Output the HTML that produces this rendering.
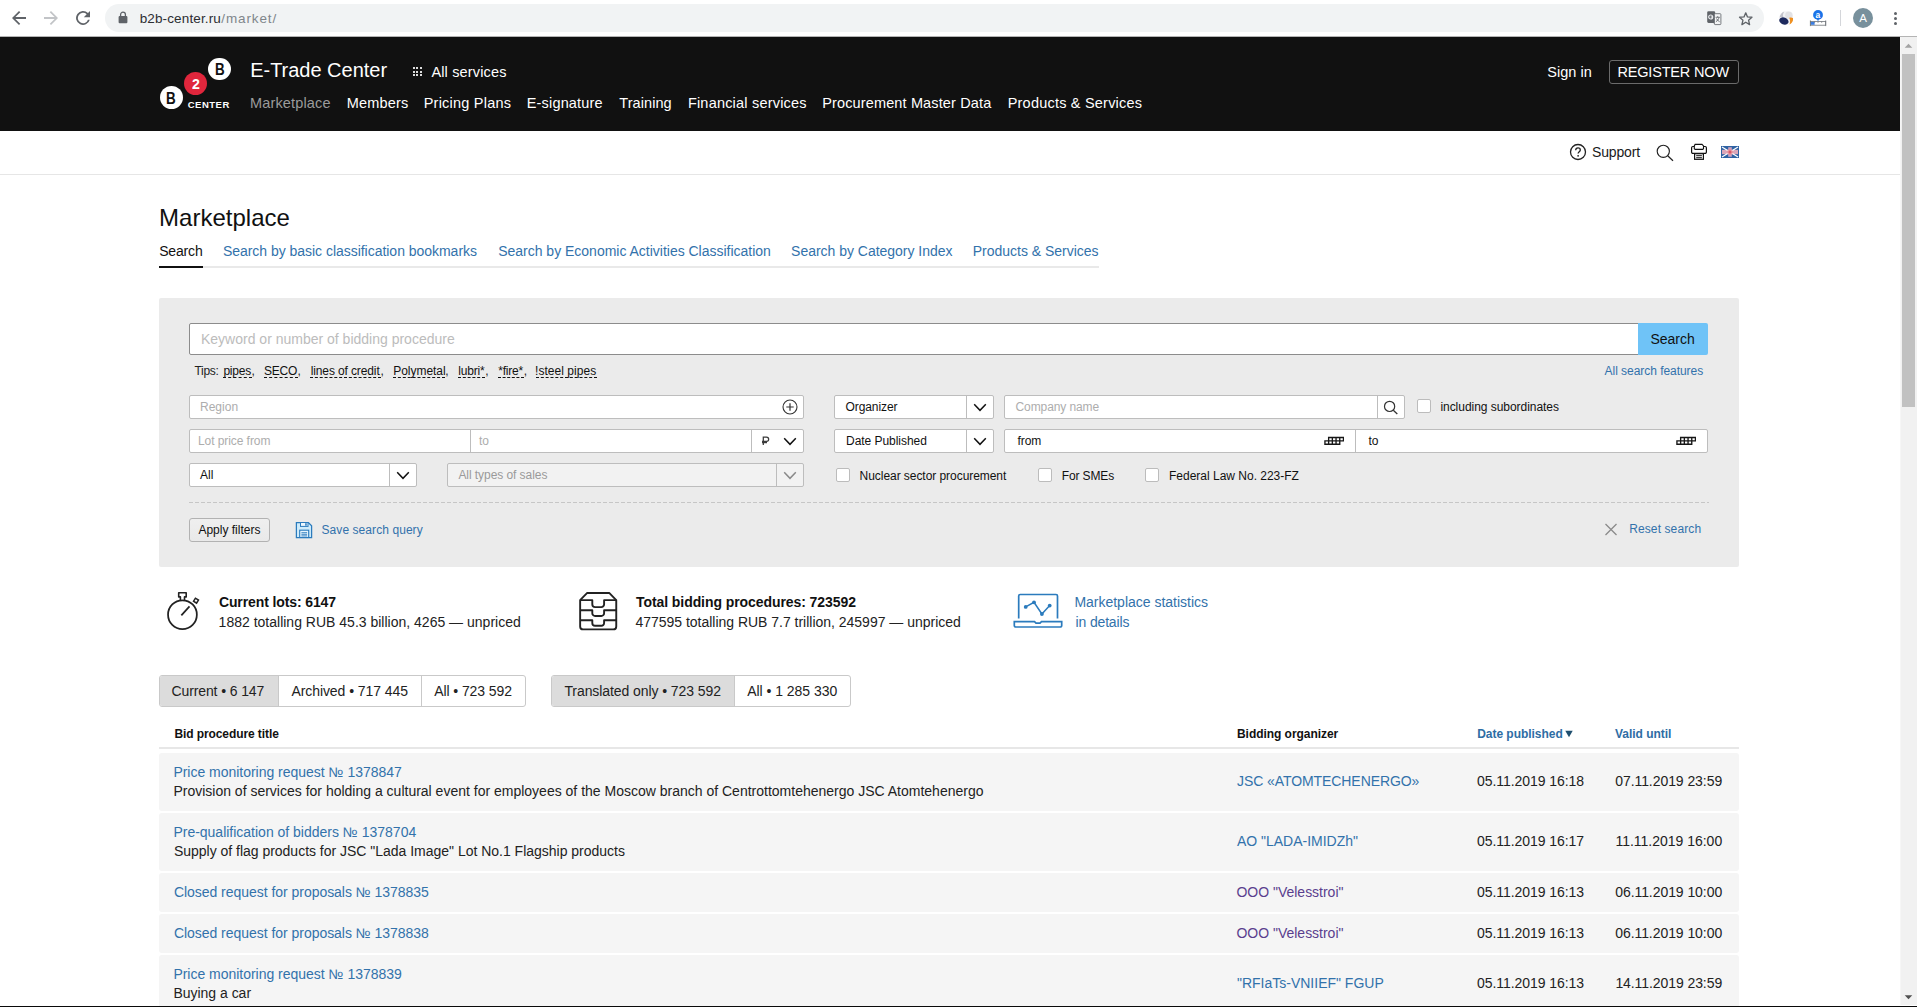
<!DOCTYPE html>
<html lang="en">
<head>
<meta charset="utf-8">
<title>Marketplace - E-Trade Center</title>
<style>
*{box-sizing:border-box;margin:0;padding:0}
html,body{width:1920px;height:1007px;overflow:hidden;background:#fff}
body{font-family:"Liberation Sans",sans-serif;font-size:14px;color:#222;position:relative}
.abs,.t,.box,svg.ic{position:absolute}
.t{white-space:nowrap;line-height:20px;display:block;text-decoration:none}
.layer{position:absolute;left:0;top:0;width:0;height:0}
.box{display:block}
.inp{background:#fff;border:1px solid #bdbdbd;border-radius:2px}
.dv{position:absolute;top:0;bottom:0;width:1px;background:#bdbdbd}
.cb{position:absolute;width:14px;height:14px;background:#fff;border:1px solid #bcbcbc;border-radius:2px}
.row{position:absolute;left:159px;width:1580px;background:#f5f5f5;border-radius:3px}
.dash{border-bottom:1px dashed #111}
</style>
</head>
<body>
<div class="layer" id="browser-chrome">
<div class="box" style="left:0;top:0;width:1920px;height:36px;background:#fff">
</div>
<div class="box" style="left:0;top:36px;width:1917px;height:1px;background:#b4b4b4">
</div>
<svg class="ic" style="left:11px;top:10px" width="16" height="16" viewBox="0 0 16 16">
<path d="M15 7.1H4.4l4.9-4.9L8 1 1 8l7 7 1.2-1.2-4.8-4.9H15z" fill="#5f6368"/>
</svg>
<svg class="ic" style="left:43px;top:10px" width="16" height="16" viewBox="0 0 16 16">
<path d="M1 7.1h10.6L6.7 2.2 8 1l7 7-7 7-1.2-1.2 4.8-4.9H1z" fill="#c2c4c7"/>
</svg>
<svg class="ic" style="left:75px;top:10px" width="16" height="16" viewBox="0 0 16 16">
<path d="M13 3A7 7 0 1 0 14.8 9.8h-1.85A5.2 5.2 0 1 1 11.7 4.3L8.8 7.2H15V1z" fill="#5f6368"/>
</svg>
<div class="box" style="left:105px;top:4px;width:1659px;height:28px;border-radius:14px;background:#f1f3f4">
</div>
<svg class="ic" style="left:118px;top:11px" width="10" height="13" viewBox="0 0 10 13">
<rect x="0.6" y="5" width="8.8" height="7.2" rx="1" fill="#5f6368"/>
<path d="M2.6 5.4V3.6a2.4 2.4 0 0 1 4.8 0v1.8" fill="none" stroke="#5f6368" stroke-width="1.3"/>
</svg>
<span class="t" style="left:139.70px;top:8.80px;font-size:13.5px;color:#2c2e32;letter-spacing:0.129px;">b2b-center.ru</span>
<span class="t" style="left:221.30px;top:8.80px;font-size:13.5px;color:#80868b;letter-spacing:0.869px;">/market/</span>
<svg class="ic" style="left:1706px;top:10px" width="16" height="16" viewBox="0 0 16 16">
<rect x="1.200" y="1.200" width="8" height="11.700" rx="1.300" fill="#5f6368"/>
<path d="M7.500 12.900l2.200 2.100V12.900z" fill="#5f6368"/>
<rect x="8.400" y="3.700" width="6.500" height="10.900" rx=".8" fill="#f4f5f6" stroke="#6a6e73" stroke-width=".9"/>
<circle cx="4.700" cy="7" r="2" fill="none" stroke="#e8eaed" stroke-width="1.200"/>
<path d="M4.700 7h2.200" stroke="#e8eaed" stroke-width="1.100"/>
<path d="M9.600 7.300h4.200M11.700 6.200v1.100M13 7.400c-.4 1.900-1.500 3.400-3.100 4.300M10.500 8.500c.6 1.400 1.600 2.500 3.100 3.200" stroke="#5f6368" stroke-width=".85" fill="none"/>
</svg>
<svg class="ic" style="left:1738.300px;top:10.500px" width="15.500" height="15.500" viewBox="0 0 16 16">
<path d="M8 1.900l1.800 4.200 4.600.4-3.500 3 1.050 4.500L8 11.600 4.050 14l1.050-4.500-3.500-3 4.600-.4z" fill="none" stroke="#5f6368" stroke-width="1.400" stroke-linejoin="round"/>
</svg>
<svg class="ic" style="left:1778.700px;top:10.900px" width="14.400" height="14.400" viewBox="0 0 14.400 14.400">
<circle cx="7.200" cy="7.200" r="7" fill="#f3f3f5"/>
<circle cx="9.900" cy="4.300" r="3.700" fill="#e2e2e5"/>
<path d="M.6 6.500C1 3.500 3 1.200 5.400.5 4 2.200 3.600 4.300 4.400 6.300 3 5.800 1.600 5.900.6 6.500z" fill="#c3c3cb"/>
<ellipse cx="4.900" cy="10" rx="4.800" ry="3.500" transform="rotate(22 4.900 10)" fill="#1d2a5e"/>
<path d="M10.200 6.800c1.500-.5 3-.3 4 .4.200 2.700-1.300 5.100-3.700 6.300.8-2 .8-4.600-.3-6.700z" fill="#f0901f"/>
</svg>
<svg class="ic" style="left:1809px;top:9px" width="18" height="18" viewBox="0 0 18 18">
<circle cx="9" cy="5.900" r="4.900" fill="#1a73e8"/>
<path d="M7.600 10.300l1.400 1.700 1.400-1.700z" fill="#1a73e8"/>
<text x="6.500" y="8.700" font-family="Liberation Sans" font-size="8.500" font-weight="bold" fill="#fff">a</text>
<rect x="1.400" y="12.500" width="15.300" height="3.700" fill="#fff" stroke="#70757a" stroke-width=".8"/>
<rect x="1.800" y="12.900" width="3.800" height="2.900" fill="#3b7de0"/>
<path d="M1.400 11.400v5.700M16.700 11.400v5.700M5.600 12.500v1.300M9 12.500v1.300M12.700 12.500v1.300" stroke="#70757a" stroke-width=".8"/>
</svg>
<div class="box" style="left:1840px;top:10px;width:1px;height:16px;background:#d4d6da">
</div>
<div class="box" style="left:1853px;top:8px;width:20px;height:20px;border-radius:50%;background:#78909c">
</div>
<span class="t" style="left:1859.20px;top:8.30px;font-size:11.5px;color:#fff;">A</span>
<div class="box" style="left:1893.900px;top:12.2px;width:3.200px;height:3.200px;border-radius:50%;background:#5f6368">
</div>
<div class="box" style="left:1893.900px;top:17.0px;width:3.200px;height:3.200px;border-radius:50%;background:#5f6368">
</div>
<div class="box" style="left:1893.900px;top:21.8px;width:3.200px;height:3.200px;border-radius:50%;background:#5f6368">
</div>
</div>
<header class="layer" id="site-header">
<div class="box" style="left:0;top:37px;width:1900px;height:94px;background:#111">
</div>
<div class="box" style="left:208.300px;top:57.800px;width:22.400px;height:22.400px;border-radius:50%;background:#fff">
</div>
<div class="box" style="left:183.900px;top:71.900px;width:22.900px;height:22.900px;border-radius:50%;background:#e0263c">
</div>
<div class="box" style="left:159.900px;top:85.900px;width:22.900px;height:22.900px;border-radius:50%;background:#fff">
</div>
<span class="t" style="left:215.26px;top:60.00px;font-size:16px;color:#111;font-weight:bold;transform:scaleX(0.839);transform-origin:0 0;">B</span>
<span class="t" style="left:191.70px;top:73.80px;font-size:15.5px;color:#fff;font-weight:bold;transform:scaleX(0.912);transform-origin:0 0;">2</span>
<span class="t" style="left:166.36px;top:88.60px;font-size:16px;color:#111;font-weight:bold;transform:scaleX(0.839);transform-origin:0 0;">B</span>
<span class="t" style="left:187.70px;top:94.80px;font-size:9.5px;color:#fff;letter-spacing:0.500px;font-weight:bold;">CENTER</span>
<span class="t" style="left:250.20px;top:60.00px;font-size:20px;color:#fff;letter-spacing:-0.018px;">E-Trade Center</span>
<div class="box" style="left:412.6px;top:67.3px;width:2px;height:2px;background:#dcdcdc">
</div>
<div class="box" style="left:416.2px;top:67.3px;width:2px;height:2px;background:#dcdcdc">
</div>
<div class="box" style="left:419.8px;top:67.3px;width:2px;height:2px;background:#dcdcdc">
</div>
<div class="box" style="left:412.6px;top:70.8px;width:2px;height:2px;background:#dcdcdc">
</div>
<div class="box" style="left:416.2px;top:70.8px;width:2px;height:2px;background:#dcdcdc">
</div>
<div class="box" style="left:419.8px;top:70.8px;width:2px;height:2px;background:#dcdcdc">
</div>
<div class="box" style="left:412.6px;top:74.4px;width:2px;height:2px;background:#dcdcdc">
</div>
<div class="box" style="left:416.2px;top:74.4px;width:2px;height:2px;background:#dcdcdc">
</div>
<div class="box" style="left:419.8px;top:74.4px;width:2px;height:2px;background:#dcdcdc">
</div>
<span class="t" style="left:431.40px;top:62.00px;font-size:14.5px;color:#fff;letter-spacing:0.157px;">All services</span>
<a class="t" style="left:250.00px;top:93.20px;font-size:14.5px;color:#9b9b9b;letter-spacing:0.158px;">Marketplace</a>
<a class="t" style="left:346.70px;top:93.20px;font-size:14.5px;color:#fff;letter-spacing:0.185px;">Members</a>
<a class="t" style="left:423.70px;top:93.20px;font-size:14.5px;color:#fff;letter-spacing:0.227px;">Pricing Plans</a>
<a class="t" style="left:526.70px;top:93.20px;font-size:14.5px;color:#fff;letter-spacing:0.181px;">E-signature</a>
<a class="t" style="left:619.30px;top:93.20px;font-size:14.5px;color:#fff;letter-spacing:0.072px;">Training</a>
<a class="t" style="left:687.90px;top:93.20px;font-size:14.5px;color:#fff;letter-spacing:0.200px;">Financial services</a>
<a class="t" style="left:822.20px;top:93.20px;font-size:14.5px;color:#fff;letter-spacing:0.139px;">Procurement Master Data</a>
<a class="t" style="left:1007.70px;top:93.20px;font-size:14.5px;color:#fff;letter-spacing:0.210px;">Products &amp; Services</a>
<a class="t" style="left:1547.30px;top:61.80px;font-size:14.5px;color:#fff;letter-spacing:0.037px;">Sign in</a>
<div class="box" style="left:1609px;top:60px;width:130px;height:24px;border:1px solid #6b6b6b;border-radius:3px">
</div>
<a class="t" style="left:1617.40px;top:61.80px;font-size:14.5px;color:#fff;letter-spacing:-0.173px;">REGISTER NOW</a>
</header>
<div class="layer" id="toolbar">
<div class="box" style="left:0;top:174px;width:1900px;height:1px;background:#e6e6e6">
</div>
<svg class="ic" style="left:1569px;top:143px" width="18" height="18" viewBox="0 0 18 18">
<circle cx="9" cy="9" r="7.500" fill="none" stroke="#222" stroke-width="1.300"/>
<path d="M6.700 7.200c0-1.400 1-2.300 2.300-2.300s2.300.9 2.300 2.100c0 1.700-2.200 1.800-2.200 3.600" fill="none" stroke="#222" stroke-width="1.300"/>
<circle cx="9.100" cy="12.800" r=".9" fill="#222"/>
</svg>
<a class="t" style="left:1592.10px;top:142.00px;font-size:14px;color:#1a1a1a;letter-spacing:-0.176px;">Support</a>
<svg class="ic" style="left:1655px;top:142.700px" width="20" height="20" viewBox="0 0 20 20">
<circle cx="8.300" cy="8.300" r="6.100" fill="none" stroke="#222" stroke-width="1.150"/>
<path d="M12.700 12.700L18 17.800" stroke="#222" stroke-width="1.200"/>
</svg>
<svg class="ic" style="left:1690px;top:143px" width="18" height="18" viewBox="0 0 18 18">
<path d="M5.100 1.400H12L13.500 2.900V5.700L12.700 6.400H5.100L4.300 5.700V2.900z" fill="#fff" stroke="#111" stroke-width="1.100"/>
<path d="M4.300 3.500H2.900a1.300 1.300 0 0 0-1.300 1.300V9.100a1.300 1.300 0 0 0 1.300 1.300H15.100a1.300 1.300 0 0 0 1.300-1.300V4.800a1.300 1.300 0 0 0-1.300-1.300H13.500" fill="none" stroke="#111" stroke-width="1.200"/>
<rect x="4.600" y="10.700" width="8.800" height="5.600" fill="#fff" stroke="#111" stroke-width="1.200"/>
<path d="M6.200 12.700h5.700M6.200 14.700h5.700" stroke="#111" stroke-width="1"/>
</svg>
<svg class="ic" style="left:1721px;top:146px" width="18" height="12" viewBox="0 0 18 12">
<rect width="18" height="12" fill="#2f62a3"/>
<path d="M9 1.200V10.800" stroke="#c9a3c0" stroke-width="3.600"/>
<path d="M1 6H17" stroke="#dba6b8" stroke-width="4.300"/>
<path d="M1 1L17 11M17 1L1 11" stroke="#fff" stroke-width="1.300"/>
<circle cx="9" cy="6" r="2.900" fill="#e58a94" opacity=".75"/>
<circle cx="9" cy="6" r="1.600" fill="#dc5a66"/>
</svg>
</div>
<main class="layer" id="content">
<div class="layer" id="title">
<h1 class="t" style="left:159.00px;top:207.60px;font-size:24px;color:#111;letter-spacing:0.021px;font-weight:normal;line-height:20px;">Marketplace</h1>
<div class="box" style="left:159px;top:266px;width:940px;height:2px;background:#e9e9e9">
</div>
<div class="box" style="left:159px;top:266px;width:44px;height:2px;background:#111">
</div>
<a class="t" style="left:159.20px;top:241.20px;font-size:14px;color:#111;letter-spacing:-0.175px;">Search</a>
<a class="t" style="left:222.90px;top:241.20px;font-size:14px;color:#3272ab;letter-spacing:-0.029px;">Search by basic classification bookmarks</a>
<a class="t" style="left:498.20px;top:241.20px;font-size:14px;color:#3272ab;letter-spacing:-0.010px;">Search by Economic Activities Classification</a>
<a class="t" style="left:791.10px;top:241.20px;font-size:14px;color:#3272ab;letter-spacing:-0.021px;">Search by Category Index</a>
<a class="t" style="left:972.80px;top:241.20px;font-size:14px;color:#3272ab;letter-spacing:-0.015px;">Products &amp; Services</a>
</div>
<section class="layer" id="search-panel">
<div class="box" style="left:159px;top:298px;width:1580px;height:269px;background:#ebebeb;border-radius:2px">
</div>
<div class="box" style="left:189px;top:323px;width:1450px;height:32px;background:#fff;border:1px solid #8c8c8c;border-radius:2px 0 0 2px">
</div>
<span class="t" style="left:201.00px;top:328.80px;font-size:14px;color:#bcbcbc;">Keyword or number of bidding procedure</span>
<div class="box" style="left:1638px;top:323px;width:70px;height:32px;background:#6fc3f7;border-radius:0 2px 2px 0">
</div>
<span class="t" style="left:1650.50px;top:328.80px;font-size:14px;color:#111;letter-spacing:-0.035px;">Search</span>
<span class="t" style="left:194.40px;top:361.00px;font-size:12px;color:#222;letter-spacing:-0.257px;">Tips:</span>
<span class="t" style="left:223.40px;top:361.00px;font-size:12px;color:#111;letter-spacing:-0.222px;">pipes</span>
<div class="box dash" style="left:222.9px;top:377px;width:28.8px;height:1px">
</div>
<span class="t" style="left:251.40px;top:361.00px;font-size:12px;color:#222;">,</span>
<span class="t" style="left:263.90px;top:361.00px;font-size:12px;color:#111;letter-spacing:-0.227px;">SECO</span>
<div class="box dash" style="left:263.9px;top:377px;width:34.0px;height:1px">
</div>
<span class="t" style="left:297.60px;top:361.00px;font-size:12px;color:#222;">,</span>
<span class="t" style="left:310.70px;top:361.00px;font-size:12px;color:#111;letter-spacing:-0.119px;">lines of credit</span>
<div class="box dash" style="left:310.2px;top:377px;width:70.7px;height:1px">
</div>
<span class="t" style="left:380.60px;top:361.00px;font-size:12px;color:#222;">,</span>
<span class="t" style="left:393.20px;top:361.00px;font-size:12px;color:#111;letter-spacing:-0.028px;">Polymetal</span>
<div class="box dash" style="left:392.7px;top:377px;width:52.8px;height:1px">
</div>
<span class="t" style="left:445.20px;top:361.00px;font-size:12px;color:#222;">,</span>
<span class="t" style="left:458.20px;top:361.00px;font-size:12px;color:#111;letter-spacing:-0.178px;">lubri*</span>
<div class="box dash" style="left:457.7px;top:377px;width:27.8px;height:1px">
</div>
<span class="t" style="left:485.20px;top:361.00px;font-size:12px;color:#222;">,</span>
<span class="t" style="left:498.20px;top:361.00px;font-size:12px;color:#111;letter-spacing:-0.189px;">*fire*</span>
<div class="box dash" style="left:497.7px;top:377px;width:26.4px;height:1px">
</div>
<span class="t" style="left:523.80px;top:361.00px;font-size:12px;color:#222;">,</span>
<span class="t" style="left:535.00px;top:361.00px;font-size:12px;color:#111;letter-spacing:0.045px;">!steel pipes</span>
<div class="box dash" style="left:535.5px;top:377px;width:61.2px;height:1px">
</div>
<a class="t" style="left:1604.60px;top:361.40px;font-size:12px;color:#3272ab;letter-spacing:-0.044px;">All search features</a>
<div class="box inp" style="left:189px;top:395px;width:615px;height:24px">
</div>
<span class="t" style="left:200.00px;top:397.30px;font-size:12px;color:#adadad;letter-spacing:0.009px;">Region</span>
<svg class="ic" style="left:782px;top:399px" width="16" height="16" viewBox="0 0 16 16">
<circle cx="8" cy="8" r="7" fill="none" stroke="#333" stroke-width="1.100"/>
<path d="M8 4.300v7.400M4.300 8h7.400" stroke="#333" stroke-width="1.200"/>
</svg>
<div class="box inp" style="left:189px;top:429px;width:615px;height:24px">
<i class="dv" style="left:280px">
</i>
<i class="dv" style="left:561px">
</i>
</div>
<span class="t" style="left:198.00px;top:431.30px;font-size:12px;color:#adadad;letter-spacing:-0.074px;">Lot price from</span>
<span class="t" style="left:479.00px;top:431.30px;font-size:12px;color:#adadad;">to</span>
<svg class="ic" style="left:760px;top:436px" width="10" height="10" viewBox="0 0 10 10">
<path d="M3.300 8.900V1H6.500a2.150 2.150 0 0 1 0 4.300H2M2 6.700H7" fill="none" stroke="#3a3a3a" stroke-width="1.250"/>
</svg>
<svg class="ic" style="left:783.0px;top:436.5px" width="14" height="9" viewBox="0 0 14 9">
<path d="M1.200 1.300L7 7.300 12.800 1.300" fill="none" stroke="#111" stroke-width="1.500"/>
</svg>
<div class="box inp" style="left:189px;top:463px;width:228px;height:24px">
<i class="dv" style="left:199px">
</i>
</div>
<span class="t" style="left:200.00px;top:465.30px;font-size:12px;color:#111;">All</span>
<svg class="ic" style="left:396.0px;top:470.5px" width="14" height="9" viewBox="0 0 14 9">
<path d="M1.200 1.300L7 7.300 12.800 1.300" fill="none" stroke="#111" stroke-width="1.500"/>
</svg>
<div class="box inp" style="left:447px;top:463px;width:357px;height:24px;background:#f2f2f2">
<i class="dv" style="left:328px">
</i>
</div>
<span class="t" style="left:458.40px;top:465.30px;font-size:12px;color:#9a9a9a;letter-spacing:-0.062px;">All types of sales</span>
<svg class="ic" style="left:783.0px;top:470.5px" width="14" height="9" viewBox="0 0 14 9">
<path d="M1.200 1.300L7 7.300 12.800 1.300" fill="none" stroke="#8a8a8a" stroke-width="1.500"/>
</svg>
<div class="box inp" style="left:834px;top:395px;width:160px;height:24px">
<i class="dv" style="left:131px">
</i>
</div>
<span class="t" style="left:845.50px;top:397.30px;font-size:12px;color:#111;letter-spacing:-0.086px;">Organizer</span>
<svg class="ic" style="left:973.0px;top:402.5px" width="14" height="9" viewBox="0 0 14 9">
<path d="M1.200 1.300L7 7.300 12.800 1.300" fill="none" stroke="#111" stroke-width="1.500"/>
</svg>
<div class="box inp" style="left:1004px;top:395px;width:401px;height:24px">
<i class="dv" style="left:372px">
</i>
</div>
<span class="t" style="left:1015.50px;top:397.30px;font-size:12px;color:#adadad;letter-spacing:-0.095px;">Company name</span>
<svg class="ic" style="left:1383px;top:400px" width="16" height="16" viewBox="0 0 16 16">
<circle cx="6.600" cy="6.400" r="5.100" fill="none" stroke="#333" stroke-width="1.200"/>
<path d="M10.300 10.200L14.300 14" stroke="#333" stroke-width="1.300"/>
</svg>
<i class="cb" style="left:1417px;top:399px">
</i>
<span class="t" style="left:1440.40px;top:397.30px;font-size:12px;color:#111;letter-spacing:-0.039px;">including subordinates</span>
<div class="box inp" style="left:834px;top:429px;width:160px;height:24px">
<i class="dv" style="left:131px">
</i>
</div>
<span class="t" style="left:846.00px;top:431.30px;font-size:12px;color:#111;letter-spacing:-0.040px;">Date Published</span>
<svg class="ic" style="left:973.0px;top:436.5px" width="14" height="9" viewBox="0 0 14 9">
<path d="M1.200 1.300L7 7.300 12.800 1.300" fill="none" stroke="#111" stroke-width="1.500"/>
</svg>
<div class="box inp" style="left:1004px;top:429px;width:704px;height:24px">
<i class="dv" style="left:350px">
</i>
</div>
<span class="t" style="left:1017.60px;top:431.30px;font-size:12px;color:#111;letter-spacing:-0.135px;">from</span>
<span class="t" style="left:1368.40px;top:431.30px;font-size:12px;color:#111;">to</span>
<svg class="ic" style="left:1323.8px;top:436.2px" width="20.400" height="9.600" preserveAspectRatio="none" viewBox="0 0 22 10">
<path d="M5 1.600H21M1 5.100H21M1 8.600H17M5 1.600V8.600M9 1.600V8.600M13 1.600V8.600M17 1.600V8.600M21 1.600V5.100M1 5.100V8.600" fill="none" stroke="#161616" stroke-width="1.450" stroke-linecap="square"/>
</svg>
<svg class="ic" style="left:1675.6px;top:436.2px" width="20.400" height="9.600" preserveAspectRatio="none" viewBox="0 0 22 10">
<path d="M5 1.600H21M1 5.100H21M1 8.600H17M5 1.600V8.600M9 1.600V8.600M13 1.600V8.600M17 1.600V8.600M21 1.600V5.100M1 5.100V8.600" fill="none" stroke="#161616" stroke-width="1.450" stroke-linecap="square"/>
</svg>
<i class="cb" style="left:836px;top:468px">
</i>
<span class="t" style="left:859.60px;top:466.20px;font-size:12px;color:#111;letter-spacing:-0.053px;">Nuclear sector procurement</span>
<i class="cb" style="left:1038px;top:468px">
</i>
<span class="t" style="left:1061.80px;top:466.20px;font-size:12px;color:#111;letter-spacing:-0.135px;">For SMEs</span>
<i class="cb" style="left:1145px;top:468px">
</i>
<span class="t" style="left:1169.00px;top:466.20px;font-size:12px;color:#111;letter-spacing:-0.006px;">Federal Law No. 223-FZ</span>
<div class="box" style="left:189px;top:502px;width:1520px;height:1px;background:repeating-linear-gradient(90deg,#c6c6c6 0 4px,transparent 4px 6px)">
</div>
<div class="box" style="left:189px;top:518px;width:81px;height:24px;border:1px solid #b2b2b2;border-radius:3px;background:linear-gradient(#efefef,#e9e9e9)">
</div>
<span class="t" style="left:198.40px;top:520.30px;font-size:12px;color:#111;">Apply filters</span>
<svg class="ic" style="left:295px;top:521px" width="18" height="18" viewBox="0 0 18 18">
<path d="M1.400 1.500H13.400L16.600 4.700V16.500H1.400z" fill="#cfecfb" stroke="#2b7bbd" stroke-width="1.250"/>
<rect x="5.500" y="1.500" width="7.500" height="3.900" fill="#eef8fe" stroke="#2b7bbd" stroke-width="1"/>
<rect x="10.200" y="2.200" width="1.500" height="2.500" fill="#2b7bbd"/>
<rect x="4.700" y="9.200" width="9" height="7.300" fill="#e6f5fd" stroke="#2b7bbd" stroke-width="1.100"/>
<path d="M6.400 11.700h5.700M6.400 13.300h5.700M6.400 14.900h5.700" stroke="#2b7bbd" stroke-width=".9"/>
</svg>
<a class="t" style="left:321.50px;top:520.30px;font-size:12px;color:#3272ab;letter-spacing:0.071px;">Save search query</a>
<svg class="ic" style="left:1604px;top:523px" width="14" height="13" viewBox="0 0 14 13">
<path d="M1.500 1L12.500 12M12.500 1L1.500 12" stroke="#8a8a8a" stroke-width="1.300"/>
</svg>
<a class="t" style="left:1629.20px;top:519.20px;font-size:12px;color:#3272ab;letter-spacing:0.106px;">Reset search</a>
</section>
<section class="layer" id="stats">
<svg class="ic" style="left:165px;top:590px" width="36" height="42" viewBox="0 0 36 42">
<circle cx="17.450" cy="24.650" r="14.400" fill="none" stroke="#222" stroke-width="1.750"/>
<path d="M15.400 10.600V6.900H13.700V2.800H21.200V6.900H19.500V10.600" fill="none" stroke="#222" stroke-width="1.600" stroke-linejoin="round"/>
<path d="M16.350 25.300L24.500 16.400" stroke="#222" stroke-width="1.750" fill="none"/>
<rect x="-1.800" y="-1.800" width="3.600" height="3.600" transform="translate(31 10.650) rotate(32)" fill="none" stroke="#222" stroke-width="1.500"/>
</svg>
<span class="t" style="left:218.90px;top:592.00px;font-size:14px;color:#111;letter-spacing:-0.109px;font-weight:bold;">Current lots: 6147</span>
<span class="t" style="left:218.60px;top:612.40px;font-size:14px;color:#222;letter-spacing:0.004px;">1882 totalling RUB 45.3 billion, 4265 — unpriced</span>
<svg class="ic" style="left:577px;top:590px" width="42" height="42" viewBox="0 0 42 42">
<path d="M3.150 10.100L10.200 2.950H32.200L39.250 10.100V36.400a3 3 0 0 1-3 3H6.150a3 3 0 0 1-3-3z" fill="none" stroke="#222" stroke-width="1.900" stroke-linejoin="round"/>
<path d="M3.150 10.150H15.300V14.300a2.800 2.800 0 0 0 2.800 2.800H24.300a2.800 2.800 0 0 0 2.800-2.800V10.150H39.250M3.150 20.300H15.300V23.200a2.800 2.800 0 0 0 2.800 2.800H24.300a2.800 2.800 0 0 0 2.800-2.800V20.300H39.250M3.150 30.300H15.300V33a2.800 2.800 0 0 0 2.800 2.800H24.300a2.800 2.800 0 0 0 2.800-2.800V30.300H39.250" fill="none" stroke="#222" stroke-width="1.900" stroke-linejoin="round"/>
</svg>
<span class="t" style="left:636.00px;top:592.00px;font-size:14px;color:#111;letter-spacing:-0.073px;font-weight:bold;">Total bidding procedures: 723592</span>
<span class="t" style="left:635.40px;top:612.40px;font-size:14px;color:#222;letter-spacing:-0.014px;">477595 totalling RUB 7.7 trillion, 245997 — unpriced</span>
<svg class="ic" style="left:1012px;top:592px" width="52" height="38" viewBox="0 0 52 38">
<path d="M6.700 26.500V4a1.500 1.500 0 0 1 1.500-1.500H44a1.500 1.500 0 0 1 1.500 1.500V26.500" fill="none" stroke="#2b7bbd" stroke-width="1.700"/>
<path d="M2.300 29.700H22.500l1.500 1.500h4l1.500-1.500H49.700V33.500a1.500 1.500 0 0 1-1.500 1.500H3.800a1.500 1.500 0 0 1-1.500-1.500z" fill="none" stroke="#2b7bbd" stroke-width="1.700"/>
<path d="M13.700 14.900L22 10.300 29.900 22 37.700 13.600" fill="none" stroke="#2b7bbd" stroke-width="1.500"/>
<circle cx="13.700" cy="14.900" r="1.900" fill="#2b7bbd"/>
<circle cx="22" cy="10.300" r="1.900" fill="#2b7bbd"/>
<circle cx="29.900" cy="22" r="1.900" fill="#2b7bbd"/>
<circle cx="37.700" cy="13.600" r="1.900" fill="#2b7bbd"/>
</svg>
<a class="t" style="left:1074.40px;top:592.00px;font-size:14px;color:#3272ab;letter-spacing:-0.011px;">Marketplace statistics</a>
<a class="t" style="left:1075.60px;top:611.60px;font-size:14px;color:#3272ab;letter-spacing:-0.163px;">in details</a>
</section>
<div class="layer" id="filter-tabs">
<div class="box" style="left:159px;top:675px;width:367px;height:32px;border:1px solid #c9c9c9;border-radius:3px;background:#fff;overflow:hidden">
<i class="abs" style="left:0;top:0;width:118px;height:30px;background:#dcdcdc">
</i>
<i class="dv" style="left:118px;background:#c9c9c9">
</i>
<i class="dv" style="left:261px;background:#c9c9c9">
</i>
</div>
<span class="t" style="left:171.50px;top:680.80px;font-size:14px;color:#222;letter-spacing:-0.116px;">Current • 6 147</span>
<span class="t" style="left:291.40px;top:680.80px;font-size:14px;color:#222;letter-spacing:-0.069px;">Archived • 717 445</span>
<span class="t" style="left:434.20px;top:680.80px;font-size:14px;color:#222;letter-spacing:-0.089px;">All • 723 592</span>
<div class="box" style="left:551px;top:675px;width:300px;height:32px;border:1px solid #c9c9c9;border-radius:3px;background:#fff;overflow:hidden">
<i class="abs" style="left:0;top:0;width:182px;height:30px;background:#dcdcdc">
</i>
<i class="dv" style="left:182px;background:#c9c9c9">
</i>
</div>
<span class="t" style="left:564.40px;top:680.80px;font-size:14px;color:#222;letter-spacing:-0.079px;">Translated only • 723 592</span>
<span class="t" style="left:747.20px;top:680.80px;font-size:14px;color:#222;letter-spacing:-0.039px;">All • 1 285 330</span>
</div>
<section class="layer" id="results">
<span class="t" style="left:174.40px;top:724.00px;font-size:12px;color:#111;letter-spacing:-0.086px;font-weight:bold;">Bid procedure title</span>
<span class="t" style="left:1237.00px;top:724.00px;font-size:12px;color:#111;letter-spacing:-0.046px;font-weight:bold;">Bidding organizer</span>
<a class="t" style="left:1477.20px;top:724.00px;font-size:12px;color:#2e6da4;letter-spacing:-0.037px;font-weight:bold;">Date published</a>
<svg class="ic" style="left:1565px;top:730px" width="8" height="8" viewBox="0 0 8 8">
<path d="M0.300 0.800H7.700L4 7.300z" fill="#1f4f6f"/>
</svg>
<a class="t" style="left:1615.00px;top:724.00px;font-size:12px;color:#2e6da4;letter-spacing:-0.034px;font-weight:bold;">Valid until</a>
<div class="box" style="left:159px;top:747px;width:1580px;height:2px;background:#e7e7e7">
</div>
<div class="row" style="top:753px;height:58px">
</div>
<a class="t" style="left:173.40px;top:762.10px;font-size:14px;color:#3272ab;letter-spacing:-0.020px;">Price monitoring request № 1378847</a>
<span class="t" style="left:173.40px;top:780.60px;font-size:14px;color:#222;">Provision of services for holding a cultural event for employees of the Moscow branch of Centrottomtehenergo JSC Atomtehenergo</span>
<a class="t" style="left:1237.00px;top:771.10px;font-size:14px;color:#3272ab;letter-spacing:-0.078px;">JSC «ATOMTECHENERGO»</a>
<span class="t" style="left:1477.00px;top:771.10px;font-size:14px;color:#222;letter-spacing:-0.064px;">05.11.2019 16:18</span>
<span class="t" style="left:1615.20px;top:771.10px;font-size:14px;color:#222;letter-spacing:-0.064px;">07.11.2019 23:59</span>
<div class="row" style="top:813px;height:58px">
</div>
<a class="t" style="left:173.40px;top:822.10px;font-size:14px;color:#3272ab;letter-spacing:-0.007px;">Pre-qualification of bidders № 1378704</a>
<span class="t" style="left:173.90px;top:840.60px;font-size:14px;color:#222;letter-spacing:-0.014px;">Supply of flag products for JSC "Lada Image" Lot No.1 Flagship products</span>
<a class="t" style="left:1237.00px;top:831.10px;font-size:14px;color:#3272ab;letter-spacing:-0.015px;">AO "LADA-IMIDZh"</a>
<span class="t" style="left:1477.00px;top:831.10px;font-size:14px;color:#222;letter-spacing:-0.064px;">05.11.2019 16:17</span>
<span class="t" style="left:1615.40px;top:831.10px;font-size:14px;color:#222;letter-spacing:-0.009px;">11.11.2019 16:00</span>
<div class="row" style="top:873px;height:39px">
</div>
<a class="t" style="left:173.90px;top:882.00px;font-size:14px;color:#3272ab;letter-spacing:-0.035px;">Closed request for proposals № 1378835</a>
<a class="t" style="left:1236.50px;top:882.00px;font-size:14px;color:#5a3e8e;letter-spacing:-0.016px;">OOO "Velesstroi"</a>
<span class="t" style="left:1477.00px;top:882.00px;font-size:14px;color:#222;letter-spacing:-0.064px;">05.11.2019 16:13</span>
<span class="t" style="left:1615.20px;top:882.00px;font-size:14px;color:#222;letter-spacing:-0.064px;">06.11.2019 10:00</span>
<div class="row" style="top:914px;height:39px">
</div>
<a class="t" style="left:173.90px;top:923.00px;font-size:14px;color:#3272ab;letter-spacing:-0.035px;">Closed request for proposals № 1378838</a>
<a class="t" style="left:1236.50px;top:923.00px;font-size:14px;color:#5a3e8e;letter-spacing:-0.016px;">OOO "Velesstroi"</a>
<span class="t" style="left:1477.00px;top:923.00px;font-size:14px;color:#222;letter-spacing:-0.064px;">05.11.2019 16:13</span>
<span class="t" style="left:1615.20px;top:923.00px;font-size:14px;color:#222;letter-spacing:-0.064px;">06.11.2019 10:00</span>
<div class="row" style="top:955px;height:58px">
</div>
<a class="t" style="left:173.40px;top:964.10px;font-size:14px;color:#3272ab;letter-spacing:-0.020px;">Price monitoring request № 1378839</a>
<span class="t" style="left:173.40px;top:982.60px;font-size:14px;color:#222;letter-spacing:-0.015px;">Buying a car</span>
<a class="t" style="left:1237.00px;top:973.10px;font-size:14px;color:#3272ab;letter-spacing:-0.006px;">"RFIaTs-VNIIEF" FGUP</a>
<span class="t" style="left:1477.00px;top:973.10px;font-size:14px;color:#222;letter-spacing:-0.064px;">05.11.2019 16:13</span>
<span class="t" style="left:1615.40px;top:973.10px;font-size:14px;color:#222;letter-spacing:-0.078px;">14.11.2019 23:59</span>
</section>
<div class="box" style="left:0;top:1006px;width:1917px;height:1px;background:#0a0a0a">
</div>
</main>
<div class="layer" id="scrollbar">
<div class="box" style="left:1900px;top:37px;width:17px;height:968px;background:#f1f1f1;border-left:1px solid #f6f6f6">
</div>
<div class="box" style="left:1902px;top:54px;width:13px;height:353px;background:#c1c1c1">
</div>
<svg class="ic" style="left:1904px;top:43px" width="9" height="6" viewBox="0 0 9 6">
<path d="M4.500 0.700L8.300 4.800H0.700z" fill="#a3a3a3"/>
</svg>
<svg class="ic" style="left:1904px;top:994px" width="9" height="6" viewBox="0 0 9 6">
<path d="M4.500 5.300L8.300 1.200H0.700z" fill="#505050"/>
</svg>
</div>
</body>
</html>
